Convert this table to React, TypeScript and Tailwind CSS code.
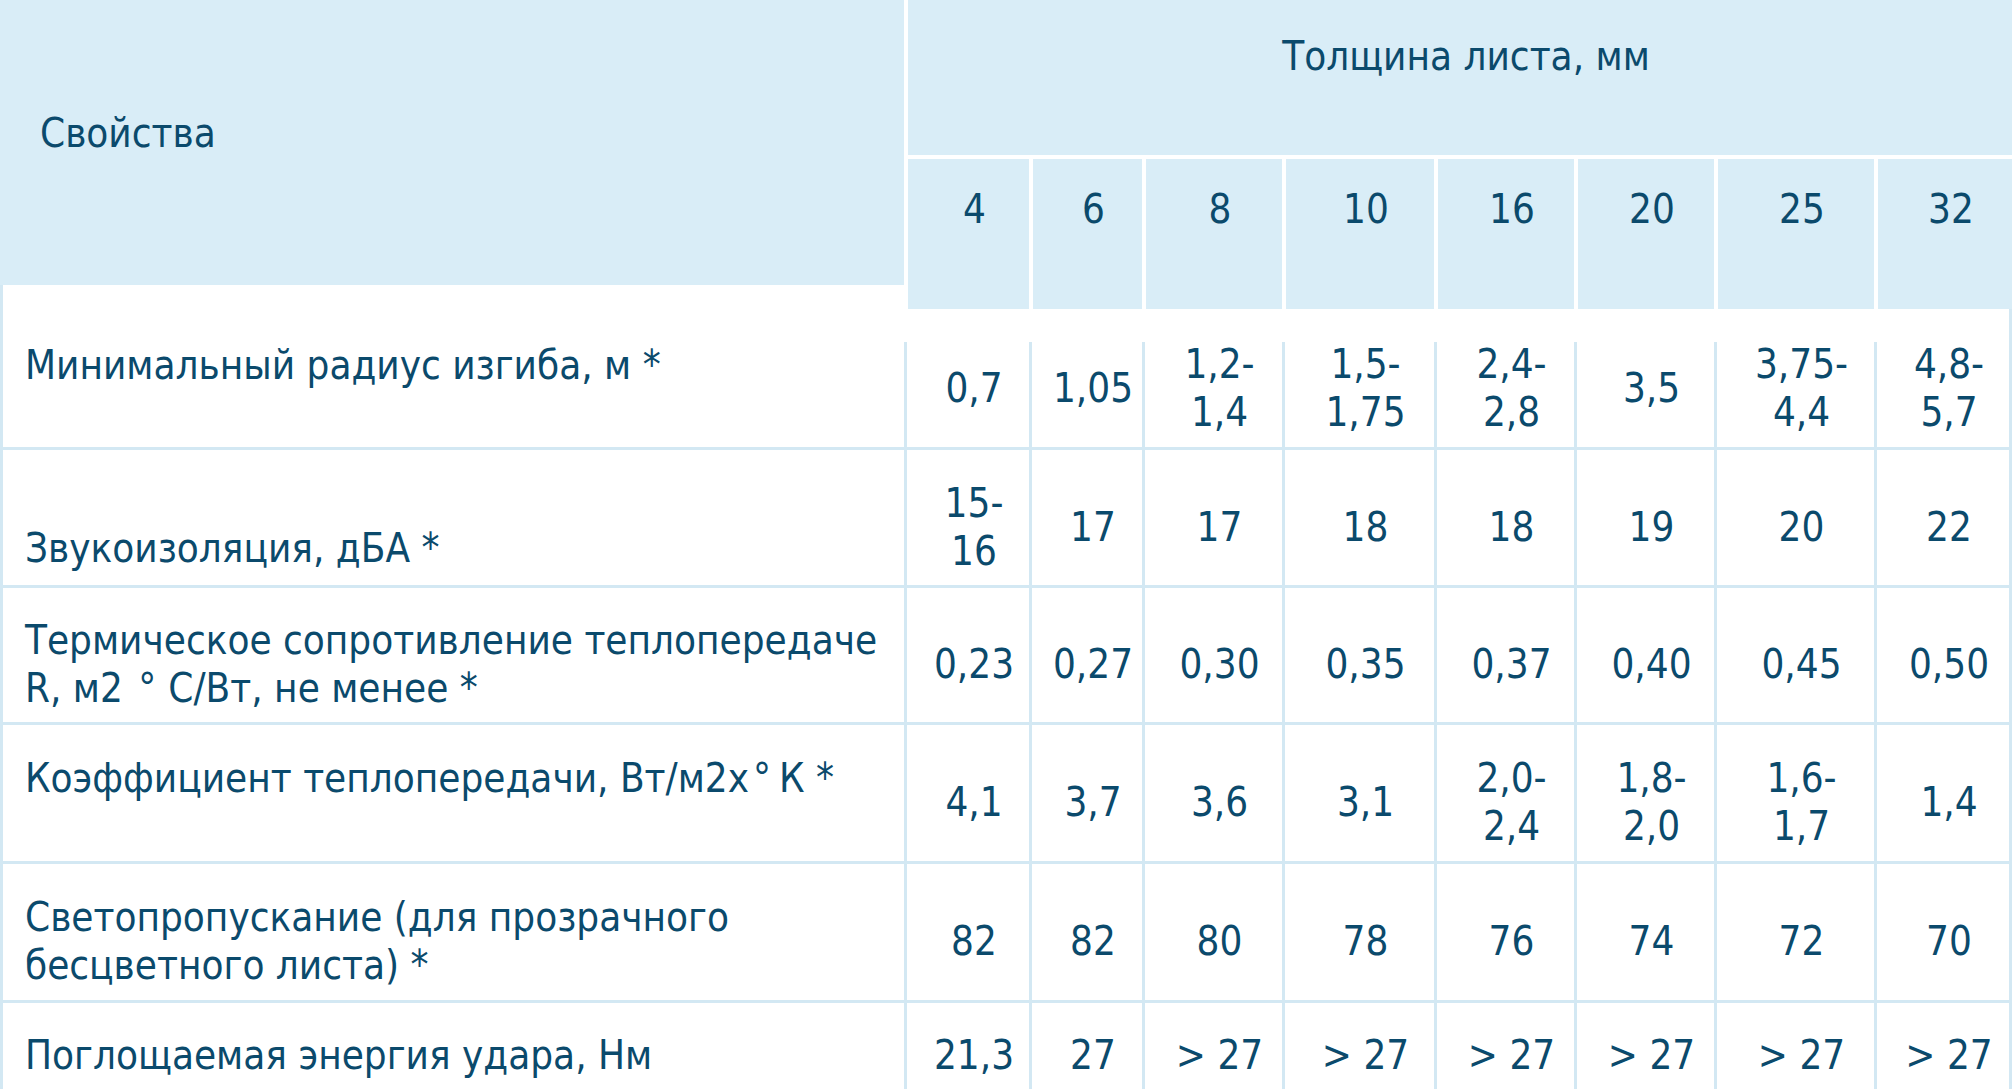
import React from 'react';

// column widths of the thickness columns, px
const colW = [
  'w-[125px]',
  'w-[113px]',
  'w-[140px]',
  'w-[152px]',
  'w-[140px]',
  'w-[140px]',
  'w-[160px]',
  'w-[138px]',
];

const thickness = ['4', '6', '8', '10', '16', '20', '25', '32'];

type Row = {
  label: React.ReactNode;
  values: string[];
  height: string;
  labelAlign: string;
  valueAlign: string;
  gapTop?: boolean;
  last?: boolean;
};

const rows: Row[] = [
  {
    label: 'Минимальный радиус изгиба, м *',
    values: ['0,7', '1,05', '1,2-\n1,4', '1,5-\n1,75', '2,4-\n2,8', '3,5', '3,75-\n4,4', '4,8-\n5,7'],
    height: 'h-[141px]',
    labelAlign: 'items-start pt-[32px]',
    valueAlign: 'items-center pb-[13px]',
    gapTop: true,
  },
  {
    label: 'Звукоизоляция, дБА *',
    values: ['15-\n16', '17', '17', '18', '18', '19', '20', '22'],
    height: 'h-[138px]',
    labelAlign: 'items-end pb-[13px]',
    valueAlign: 'items-center pt-[18px]',
  },
  {
    label: (
      <>
        Термическое сопротивление теплопередаче
        <br />
        R, м2 <span className="ml-[4px] mr-[12px]">°</span>С/Вт, не менее *
      </>
    ),
    values: ['0,23', '0,27', '0,30', '0,35', '0,37', '0,40', '0,45', '0,50'],
    height: 'h-[137px]',
    labelAlign: 'items-center pt-[18px]',
    valueAlign: 'items-center pt-[18px]',
  },
  {
    label: (
      <>
        Коэффициент теплопередачи, Вт/м2х<span className="ml-[4px] mr-[8px]">°</span>К *
      </>
    ),
    values: ['4,1', '3,7', '3,6', '3,1', '2,0-\n2,4', '1,8-\n2,0', '1,6-\n1,7', '1,4'],
    height: 'h-[139px]',
    labelAlign: 'items-start pt-[29px]',
    valueAlign: 'items-center pt-[18px]',
  },
  {
    label: (
      <>
        Светопропускание (для прозрачного
        <br />
        бесцветного листа) *
      </>
    ),
    values: ['82', '82', '80', '78', '76', '74', '72', '70'],
    height: 'h-[139px]',
    labelAlign: 'items-center pt-[18px]',
    valueAlign: 'items-center pt-[18px]',
  },
  {
    label: 'Поглощаемая энергия удара, Нм',
    values: ['21,3', '27', '> 27', '> 27', '> 27', '> 27', '> 27', '> 27'],
    height: 'h-[86px]',
    labelAlign: 'items-start pt-[28px]',
    valueAlign: 'items-start pt-[28px]',
    last: true,
  },
];

const line = 'border-[#d3e8f3]';

const BodyRow = ({ row }: { row: Row }) => (
  <div className={`flex ${row.height}`}>
    <div
      className={`flex w-[904px] shrink-0 border-l-[3px] ${row.last ? '' : 'border-b-[3px]'} ${line} pl-[22px] ${row.labelAlign}`}
    >
      <span className="whitespace-nowrap">{row.label}</span>
    </div>
    {row.values.map((v, i) => {
      const w = colW[i];
      const right = i === row.values.length - 1 ? 'border-r-[3px]' : '';
      if (row.gapTop) {
        return (
          <div key={i} className={`flex shrink-0 flex-col ${w}`}>
            <div className={`h-[33px] shrink-0 ${right} ${line}`} />
            <div
              className={`flex min-h-0 flex-1 justify-center border-b-[3px] border-l-[3px] ${right} ${line} pl-3 text-center whitespace-pre-line ${row.valueAlign}`}
            >
              {v}
            </div>
          </div>
        );
      }
      return (
        <div
          key={i}
          className={`flex shrink-0 justify-center border-l-[3px] ${row.last ? '' : 'border-b-[3px]'} ${right} ${line} pl-3 text-center whitespace-pre-line ${w} ${row.valueAlign}`}
        >
          {v}
        </div>
      );
    })}
  </div>
);

export default function App() {
  return (
    <div className="h-[1089px] w-[2016px] overflow-hidden bg-white font-['DejaVu_Sans_Condensed','DejaVu_Sans',sans-serif] font-stretch-condensed text-[40px] leading-[48px] text-[#0b4a6c]">
      {/* header */}
      <div className="flex h-[309px]">
        <div className="flex w-[904px] shrink-0 flex-col">
          <div className="h-[285px] bg-[#d9edf7] pl-[40px] pt-[109px]">Свойства</div>
          <div className={`flex-1 border-l-[3px] ${line}`} />
        </div>
        <div className="flex w-[1108px] shrink-0 flex-col">
          <div className="h-[155px] border-l-4 border-white bg-[#d9edf7] pl-3 pt-[32px] text-center">
            Толщина листа, мм
          </div>
          <div className="mt-1 flex flex-1">
            {thickness.map((t, i) => (
              <div
                key={t}
                className={`shrink-0 border-l-4 border-white bg-[#d9edf7] pl-3 pt-[26px] text-center ${colW[i]}`}
              >
                {t}
              </div>
            ))}
          </div>
        </div>
      </div>

      {/* body */}
      {rows.map((r, i) => (
        <BodyRow key={i} row={r} />
      ))}
    </div>
  );
}
